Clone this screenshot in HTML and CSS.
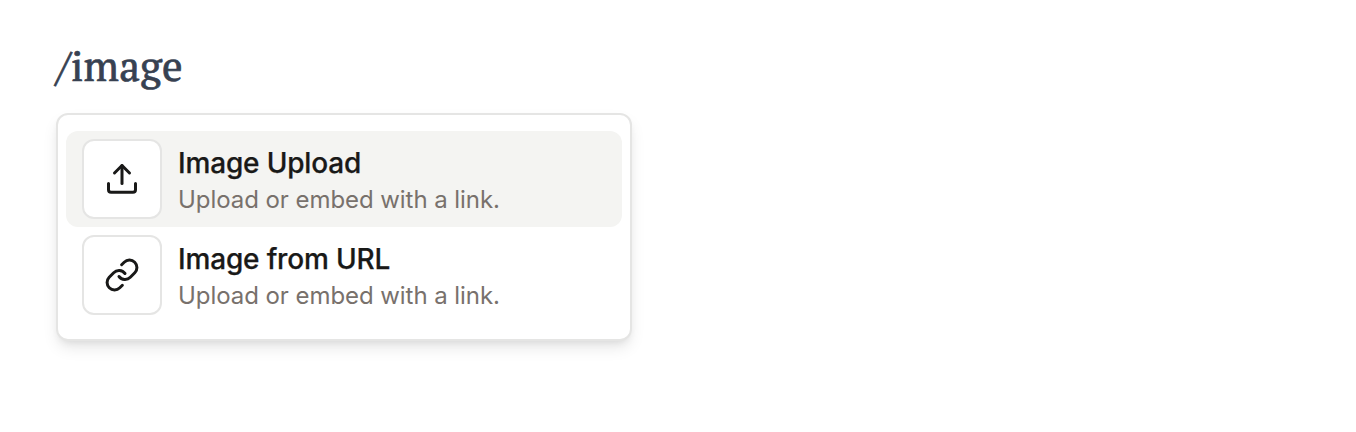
FILE: index.html
```html
<!DOCTYPE html>
<html lang="en">
<head>
<meta charset="utf-8">
<title>Editor</title>
<link rel="stylesheet" href="styles.css">
</head>
<body>
<main class="editor">
  <p class="query"><span class="slash">/</span><span class="term">image</span></p>
  <div class="menu" role="listbox">
    <button class="item item-active">
      <span class="icon-box">
        <svg class="icon" viewBox="0 0 24 24"><path d="M21 15v4.2a1.7 1.7 0 0 1-1.7 1.7H4.7A1.7 1.7 0 0 1 3 19.2V15"/><path d="M17 8l-5-5-5 5"/><path d="M12 3v12"/></svg>
      </span>
      <span class="copy">
        <span class="title">Image Upload</span>
        <span class="desc">Upload or embed with a link.</span>
      </span>
    </button>
    <button class="item">
      <span class="icon-box">
        <svg class="icon" viewBox="0 0 24 24"><path d="M10 13a5 5 0 0 0 7.54.54l3-3a5 5 0 0 0-7.07-7.07l-1.72 1.71"/><path d="M14 11a5 5 0 0 0-7.54-.54l-3 3a5 5 0 0 0 7.07 7.07l1.71-1.71"/></svg>
      </span>
      <span class="copy">
        <span class="title">Image from URL</span>
        <span class="desc">Upload or embed with a link.</span>
      </span>
    </button>
  </div>
</main>
</body>
</html>
```
FILE: styles.css
```css
* { box-sizing: border-box; }
body { margin: 0; background: #fff; font-family: Inter, sans-serif; }
.editor { padding: 36px 56px; }
.query {
  display: flex;
  margin: 0;
  height: 77px;
  font-family: "PT Serif", "Noto Serif", "Liberation Serif", serif;
  font-size: 41px;
  line-height: 60px;
  color: #374151;
  -webkit-text-stroke: 0.7px #374151;
}
.slash { width: 15px; transform: skewX(-3deg); }
.term { letter-spacing: 0.25px; }
.menu {
  width: 576px;
  height: 228px;
  padding: 16px 8px;
  border: 2px solid #e5e5e4;
  border-radius: 12px;
  background: #fff;
  box-shadow: 0 8px 16px -2px rgb(0 0 0 / 0.1), 0 4px 8px -4px rgb(0 0 0 / 0.1);
}
.item {
  display: flex;
  align-items: center;
  gap: 16px;
  width: 556px;
  height: 96px;
  padding: 0 16px;
  border: 0;
  border-radius: 12px;
  background: transparent;
  color: #191918;
  font-family: inherit;
  text-align: left;
}
.item-active { background: #f4f4f2; }
.icon-box {
  display: flex;
  align-items: center;
  justify-content: center;
  width: 80px;
  height: 80px;
  border: 2px solid #e5e5e4;
  border-radius: 12px;
  background: #fff;
}
.icon {
  width: 36px;
  height: 36px;
  fill: none;
  stroke: currentColor;
  stroke-width: 2;
  stroke-linecap: round;
  stroke-linejoin: round;
}
.copy { display: block; padding-top: 2px; }
.title {
  display: block;
  font-size: 28px;
  line-height: 40px;
  font-weight: 500;
  letter-spacing: -0.17px;
  -webkit-text-stroke: 0.25px currentColor;
}
.desc { display: block; font-size: 24px; line-height: 34px; color: #78716c; letter-spacing: -0.06px; }
```
